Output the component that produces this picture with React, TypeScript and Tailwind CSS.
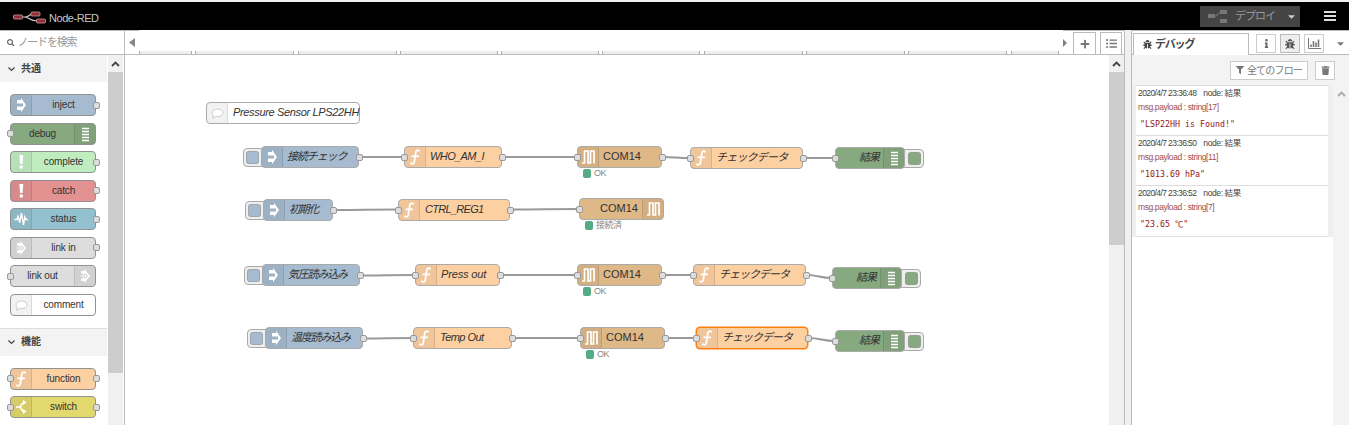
import React from "react";
import { FaSearch, FaBug, FaInfo, FaFilter, FaTrash, FaPlus, FaListUl, FaCaretDown } from "react-icons/fa";

type Kind = "inject" | "debug" | "complete" | "catch" | "status" | "linkin" | "linkout" | "comment" | "function" | "switch" | "serialin" | "serialout";

const COLORS: Record<Kind, string> = {
  inject: "bg-[#a6bbcf]",
  debug: "bg-[#87a980]",
  complete: "bg-[#c0edc0]",
  catch: "bg-[#e49191]",
  status: "bg-[#94c1d0]",
  linkin: "bg-[#dddddd]",
  linkout: "bg-[#dddddd]",
  comment: "bg-white",
  function: "bg-[#fdd0a2]",
  switch: "bg-[#e2d96e]",
  serialin: "bg-[#deb887]",
  serialout: "bg-[#deb887]",
};

function Glyph({ kind }: { kind: Kind }) {
  const common = { width: 20, height: 20, viewBox: "0 0 20 20", fill: "none", stroke: "#fff", className: "shrink-0" };
  switch (kind) {
    case "inject":
      return (
        <svg {...common}>
          <path d="M6 5h4V2.800l5 7.200-5 7.200V15H6v-3.500h6V8.500H6z" fill="#fff" stroke="none" />
        </svg>
      );
    case "debug":
      return (
        <svg {...common}>
          <path d="M7 4.500h7M7 7.500h7M7 10.500h7M7 13.500h7M7 16.500h7" strokeWidth="1.500" />
        </svg>
      );
    case "complete":
    case "catch":
      return (
        <svg {...common}>
          <path d="M8.300 3h4l-.8 9h-2.400zM8.700 13.500h3.200v3H8.700z" fill="#fff" stroke="none" />
        </svg>
      );
    case "status":
      return (
        <svg {...common}>
          <path d="M3.500 10.500H6l1-3 1.700 6L10.500 4l2 12 1.300-8 1 2.500h2" strokeWidth="1.400" />
        </svg>
      );
    case "linkin":
    case "linkout":
      return (
        <svg {...common}>
          <path d="M6 5h3.500V3l5.500 7-5.500 7v-2H6v-2.500h2V7.500H6z" fill="#fff" stroke="none" />
          <path d="M5.500 10h3" strokeWidth="1.200" />
          <circle cx="10.500" cy="10" r="1.700" stroke="#c8c8c8" />
        </svg>
      );
    case "comment":
      return (
        <svg {...common}>
          <path d="M10.500 6c3 0 5.500 1.600 5.500 3.800s-2.500 3.800-5.500 3.800c-.6 0-1.200-.1-1.700-.2L5.500 15.500l.9-2.900c-.9-.7-1.400-1.600-1.400-2.800C5 7.600 7.500 6 10.500 6z" fill="#fff" stroke="#ccc" />
        </svg>
      );
    case "function":
      return (
        <svg {...common}>
          <path d="M14.500 4.500c-.6-2-3.200-2-3.700.7l-1.500 9.600c-.5 2.700-3 2.700-3.700.9M6.500 9.300H14" strokeWidth="1.800" />
        </svg>
      );
    case "switch":
      return (
        <svg {...common}>
          <path d="M5 10h3c3 0 2-4.500 5-4.500M8 10c3 0 2 4.500 5 4.500" strokeWidth="1.700" />
          <path d="M12 3l3.500 2.500L12 8zM12 12l3.500 2.500L12 17z" fill="#fff" stroke="none" />
        </svg>
      );
    default:
      return (
        <svg {...common}>
          <path d="M4 16h2.500V4H10v12h2.500V4H16v12.500" strokeWidth="1.700" />
        </svg>
      );
  }
}

const Port = ({ side }: { side: "left" | "right" }) => (
  <span className={`absolute top-1/2 -mt-[3.5px] h-[7px] w-[7px] rounded-[2px] border border-[#999] bg-[#ddd] ${side === "left" ? "-left-[4.5px]" : "-right-[4.5px]"}`} />
);

function NodeBox({ kind, label, left, right, iconRight, canvas, selected, labelClass = "" }: {
  kind: Kind; label: string; left?: boolean; right?: boolean; iconRight?: boolean; canvas?: boolean; selected?: boolean; labelClass?: string;
}) {
  const align = !canvas ? "justify-center text-[10px] tracking-[-0.150px]" : iconRight ? "justify-end text-[11px]" : "justify-start text-[11px]";
  return (
    <div className={`relative flex h-[22px] w-full items-stretch rounded-[4px] border ${COLORS[kind]} ${selected ? "border-[#ff7f0e] shadow-[0_0_0_0.5px_#ff7f0e]" : canvas ? "border-[#aaa]" : "border-[#929292]"} ${iconRight ? "flex-row-reverse" : ""}`}>
      <span className={`flex w-[21px] shrink-0 items-center justify-center overflow-hidden bg-black/5 ${iconRight ? "rounded-r-[3px] border-l" : "rounded-l-[3px] border-r"} border-black/10`}>
        <Glyph kind={kind} />
      </span>
      <span className={`flex min-w-0 flex-1 items-center whitespace-nowrap leading-none text-[#333] ${align} ${labelClass}`}>{label}</span>
      {left && <Port side="left" />}
      {right && <Port side="right" />}
    </div>
  );
}

type PaletteItem = { kind: Kind; label: string; left?: boolean; right?: boolean; iconRight?: boolean };
const COMMON: PaletteItem[] = [
  { kind: "inject", label: "inject", right: true },
  { kind: "debug", label: "debug", left: true, iconRight: true },
  { kind: "complete", label: "complete", right: true },
  { kind: "catch", label: "catch", right: true },
  { kind: "status", label: "status", right: true },
  { kind: "linkin", label: "link in", right: true },
  { kind: "linkout", label: "link out", left: true, iconRight: true },
  { kind: "comment", label: "comment" },
];
const FUNCTIONS: PaletteItem[] = [
  { kind: "function", label: "function", left: true, right: true },
  { kind: "switch", label: "switch", left: true, right: true },
];

const Chevron = ({ up, className = "" }: { up?: boolean; className?: string }) => (
  <svg width="9" height="6" viewBox="0 0 9 6" fill="none" stroke="currentColor" className={className}>
    <path d={up ? "M1 5l3.500-3.500L8 5" : "M1.500 1.500l3 3 3-3"} strokeWidth={up ? 1.800 : 1.200} />
  </svg>
);

function Category({ title, items, top }: { title: string; items: PaletteItem[]; top?: boolean }) {
  return (
    <section>
      <h2 className={`flex items-center gap-[5px] bg-[#f3f3f3] pl-[7px] text-[10px] font-bold text-[#444] ${top ? "h-[27px]" : "h-[28px] border-t border-[#ddd]"}`}>
        <Chevron />
        <span className="pb-px">{title}</span>
      </h2>
      <div className="flex flex-col gap-[6.500px] pt-[12px] pb-[12px] pl-[10px]">
        {items.map((i) => (
          <div key={i.label} className="w-[86px]"><NodeBox {...i} /></div>
        ))}
      </div>
    </section>
  );
}

function Scrollbar({ thumb }: { thumb: string }) {
  return (
    <div className="flex w-[15px] shrink-0 flex-col bg-[#f0f0f0]">
      <div className="flex h-[17px] items-center justify-center text-[#444]"><Chevron up /></div>
      <div className={`bg-[#cdcdcd] ${thumb}`} />
    </div>
  );
}

const NODES: { x: number; y: number; w: string; kind: Kind; label: string; left?: boolean; right?: boolean; iconRight?: boolean; selected?: boolean; button?: "left" | "right"; status?: string; labelClass?: string }[] = [
  { x: 206, y: 102, w: "w-[154px]", kind: "comment", label: "Pressure Sensor LPS22HH", labelClass: "italic pl-[5px] pb-[2px] tracking-[-0.340px]" },
  { x: 261, y: 146, w: "w-[98px]", kind: "inject", label: "接続チェック", right: true, button: "left", labelClass: "italic pl-[4px] pb-px tracking-[-1.100px]" },
  { x: 404, y: 146, w: "w-[98px]", kind: "function", label: "WHO_AM_I", left: true, right: true, labelClass: "italic pl-[4px] pb-px tracking-[-0.600px]" },
  { x: 577, y: 146, w: "w-[85px]", kind: "serialin", label: "COM14", left: true, right: true, status: "OK", labelClass: "pl-[4px] pb-px" },
  { x: 690, y: 147, w: "w-[113px]", kind: "function", label: "チェックデータ", left: true, right: true, labelClass: "italic pl-[4px] pb-[2px] tracking-[-0.800px]" },
  { x: 835, y: 147, w: "w-[70px]", kind: "debug", label: "結果", left: true, iconRight: true, button: "right", labelClass: "italic pr-[4px] pb-px tracking-[-1px]" },
  { x: 263, y: 199, w: "w-[70px]", kind: "inject", label: "初期化", right: true, button: "left", labelClass: "italic pl-[4px] pb-px tracking-[-1.300px]" },
  { x: 398, y: 199, w: "w-[112px]", kind: "function", label: "CTRL_REG1", left: true, right: true, labelClass: "italic pl-[5px] pb-[2px] tracking-[-0.700px]" },
  { x: 579, y: 198, w: "w-[85px]", kind: "serialout", label: "COM14", left: true, iconRight: true, status: "接続済", labelClass: "pr-[4px] pb-px" },
  { x: 262, y: 264, w: "w-[98px]", kind: "inject", label: "気圧読み込み", right: true, button: "left", labelClass: "italic pl-[4px] pb-[2px] tracking-[-1.200px]" },
  { x: 415, y: 264, w: "w-[85px]", kind: "function", label: "Press out", left: true, right: true, labelClass: "italic pl-[4px] pb-px tracking-[-0.150px]" },
  { x: 577, y: 264, w: "w-[85px]", kind: "serialin", label: "COM14", left: true, right: true, status: "OK", labelClass: "pl-[4px] pb-px" },
  { x: 693, y: 264, w: "w-[113px]", kind: "function", label: "チェックデータ", left: true, right: true, labelClass: "italic pl-[4px] pb-[2px] tracking-[-1px]" },
  { x: 832, y: 267, w: "w-[70px]", kind: "debug", label: "結果", left: true, iconRight: true, button: "right", labelClass: "italic pr-[4px] pb-[2px] tracking-[-1px]" },
  { x: 265, y: 327, w: "w-[98px]", kind: "inject", label: "温度読み込み", right: true, button: "left", labelClass: "italic pl-[4px] pb-[2px] tracking-[-1.200px]" },
  { x: 413, y: 327, w: "w-[99px]", kind: "function", label: "Temp Out", left: true, right: true, labelClass: "italic pl-[5px] pb-px tracking-[-0.550px]" },
  { x: 580, y: 327, w: "w-[85px]", kind: "serialin", label: "COM14", left: true, right: true, status: "OK", labelClass: "pl-[4px] pb-px" },
  { x: 696, y: 327, w: "w-[112px]", kind: "function", label: "チェックデータ", left: true, right: true, selected: true, labelClass: "italic pl-[4px] pb-[2px] tracking-[-1px]" },
  { x: 835, y: 330, w: "w-[70px]", kind: "debug", label: "結果", left: true, iconRight: true, button: "right", labelClass: "italic pr-[4px] pb-[2px] tracking-[-1px]" },
];

const WIRES = [
  [359, 157, 404, 157], [502, 157, 577, 157], [662, 157, 690, 158], [803, 158, 835, 158],
  [333, 210, 398, 209.5], [510, 209.5, 579, 209],
  [360, 275.5, 415, 275], [500, 275, 577, 275], [662, 275, 693, 275], [806, 275, 832, 278],
  [363, 338.5, 413, 338], [512, 338, 580, 338], [665, 338, 696, 338], [808, 338, 835, 341],
];

const ORIGIN_X = 125;
const ORIGIN_Y = 55;

function Canvas() {
  return (
    <div className="relative min-w-0 flex-1 overflow-hidden bg-white">
      <svg className="absolute inset-0" width="983" height="370" viewBox="125 55 983 370" fill="none">
        {WIRES.map(([a, b, c, d], i) => {
          const m = (c - a) * 0.5;
          return <path key={i} d={`M${a} ${b}C${a + m} ${b} ${c - m} ${d} ${c} ${d}`} stroke="#999" strokeWidth="2" />;
        })}
      </svg>
      {NODES.map(({ x, y, w, button, status, ...n }, i) => (
        <div key={i} className={`absolute ${w}`} style={{ left: x - ORIGIN_X, top: y - ORIGIN_Y }}>
          {button && (
            <span className={`absolute top-[2px] flex h-[19px] w-[23px] items-center rounded-[4px] border border-[#aaa] bg-[#eee] px-[2px] ${button === "left" ? "-left-[18px] justify-start" : "-right-[19px] justify-end"}`}>
              <span className={`h-[13px] w-[13px] rounded-[3px] border border-[#999]/60 ${COLORS[n.kind]}`} />
            </span>
          )}
          <NodeBox {...n} canvas />
          {status && (
            <span className="absolute top-[22px] left-[6px] flex h-[10px] items-center gap-[3px] text-[9px] leading-none whitespace-nowrap text-[#888]">
              <span className="h-[9px] w-[8px] rounded-[2px] bg-[#5a8]" />
              <span className="tracking-[-0.500px]">{status}</span>
            </span>
          )}
        </div>
      ))}
    </div>
  );
}

const TAB_WIDTHS = ["w-[53px]", "w-[99px]", "w-[99px]", "w-[98px]", "w-[98px]", "w-[98px]", "w-[99px]", "w-[99px]", "w-[99px]"];

function Workspace() {
  return (
    <main className="flex w-[1000px] shrink-0 flex-col border-r border-[#bbb]">
      <div className="flex h-[25px] items-stretch border-b border-[#bbb]">
        <div className="flex w-[14px] items-center border-t border-[#bbb] pl-[4px]">
          <svg width="6" height="9" viewBox="0 0 6 9"><path d="M6 0v9L0 4.500z" fill="#888" /></svg>
        </div>
        <div className="flex flex-1 items-end gap-[3.300px] overflow-hidden">
          {TAB_WIDTHS.map((w, i) => <span key={i} className={`h-[3px] shrink-0 border-x border-[#aaa] bg-[#eee] ${w}`} />)}
          <span className="h-[3px] w-[48px] shrink-0 border-x border-[#aaa] bg-[#eee]" />
        </div>
        <div className="flex w-[61px] items-end border-t border-[#bbb]">
          <svg className="mb-[7px]" width="4" height="8" viewBox="0 0 4 8"><path d="M0 0v8l4-4z" fill="#788288" /></svg>
          <span className="ml-[6px] flex h-[22px] w-[23px] items-center justify-center border border-b-0 border-[#bbb] text-[10px] text-[#777]"><FaPlus /></span>
          <span className="ml-[4px] flex h-[22px] w-[22px] items-center justify-center border border-b-0 border-[#bbb] text-[11px] text-[#777]"><FaListUl /></span>
        </div>
      </div>
      <div className="flex min-h-0 flex-1">
        <Canvas />
        <Scrollbar thumb="h-[173px]" />
      </div>
    </main>
  );
}

const MESSAGES = [
  { time: "2020/4/7 23:36:48", len: 17, value: '"LSP22HH is Found!"' },
  { time: "2020/4/7 23:36:50", len: 11, value: '"1013.69 hPa"' },
  { time: "2020/4/7 23:36:52", len: 7, value: '"23.65 ℃"' },
];

function Sidebar() {
  return (
    <aside className="flex w-[218px] shrink-0 flex-col border-l border-[#bbb] bg-[#f3f3f3]">
      <div className="flex h-[25px] shrink-0 items-end border-t border-b border-[#bbb] bg-white pl-px">
        <div className="-mb-px flex h-[22px] w-[116px] items-center gap-[3px] border border-b-0 border-[#bbb] bg-white pb-px pl-[9px] text-[11px] font-bold text-[#444]">
          <FaBug className="text-[9px]" />
          <span className="tracking-[-1.200px]">デバッグ</span>
        </div>
        <span className="mb-[1px] ml-[7px] flex h-[19px] w-[20px] items-center justify-center border border-[#ccc] text-[9px] text-[#666]"><FaInfo /></span>
        <span className="mb-[1px] ml-[4px] flex h-[19px] w-[20px] items-center justify-center border border-[#bbb] bg-[#eee] text-[10px] text-[#555]"><FaBug /></span>
        <span className="mb-[1px] ml-[4px] flex h-[19px] w-[20px] items-center justify-center border border-[#ccc] text-[#777]">
          <svg width="13" height="11" viewBox="0 0 13 11" fill="none" stroke="currentColor"><path d="M.5 0v10.500H13" /><path d="M3 9V6.500M5.500 9V3M8 9V4.500M10.500 9V1.500" strokeWidth="1.600" /></svg>
        </span>
        <FaCaretDown className="mb-[5px] ml-[11px] text-[11px] text-[#777]" />
      </div>
      <div className="flex h-[30px] shrink-0 items-center gap-[7px] pl-[98px] text-[#777]">
        <span className="flex h-[19px] w-[78px] items-center justify-center gap-[3px] border border-[#ccc] bg-white text-[10px]">
          <FaFilter className="text-[8px]" /><span className="tracking-[-0.800px] whitespace-nowrap">全てのフロー</span>
        </span>
        <span className="flex h-[19px] w-[20px] items-center justify-center border border-[#ccc] bg-white text-[9px]"><FaTrash /></span>
      </div>
      <div className="flex min-h-0 flex-1">
        <div className="flex w-[201px] flex-col bg-white">
          <div className="border-r-[5px] border-l-[4px] border-[#eee]">
            {MESSAGES.map((m, i) => (
              <article key={m.len} className={`flex flex-col border-b border-[#ddd] pl-[2px] whitespace-nowrap ${i === 0 ? "h-[51px] border-t" : i === 1 ? "h-[50px]" : "h-[51px]"}`}>
                <div className="flex h-[15px] items-center gap-[7px] text-[8.500px] tracking-[-0.600px] text-[#444]">
                  <span>{m.time}</span><span className="tracking-[-0.400px]">node: 結果</span>
                </div>
                <div className="flex h-[13px] items-center text-[8.500px] tracking-[-0.400px] text-[#a05050]">msg.payload : string[{m.len}]</div>
                <div className="flex h-[21px] items-center pl-[2px] font-['DejaVu_Sans_Mono','Noto_Sans_CJK_JP',monospace] text-[8.300px] text-[#981515]">{m.value}</div>
              </article>
            ))}
          </div>
        </div>
        <div className="flex flex-1 justify-center bg-[#f3f3f3] pt-[6px] text-[#aaa]"><Chevron up /></div>
      </div>
    </aside>
  );
}

export default function App() {
  return (
    <div className="flex h-[425px] w-[1349px] flex-col overflow-hidden bg-white font-['Liberation_Sans','Noto_Sans_CJK_JP',sans-serif]">
      <header className="flex h-[30px] shrink-0 items-center border-t-2 border-[#eef0f2] bg-black">
        <svg className="mt-[3px] ml-[13px]" width="34" height="14" viewBox="0 0 34 14" fill="none">
          <path d="M9 6h3c5 0 4-3.500 9-3.500M11 6c6 0 5 4 13 4" stroke="#ccc" strokeWidth="1.200" />
          <g fill="#8f2f35" stroke="#c99" strokeWidth=".8">
            <rect x=".5" y="4" width="9" height="4" rx="1" />
            <rect x="18" y="1" width="9" height="4" rx="1" />
            <rect x="23.500" y="8" width="9" height="4" rx="1" />
          </g>
        </svg>
        <span className="ml-[2px] pt-[4px] text-[11px] tracking-[-0.450px] text-[#c7c7c7]">Node-RED</span>
        <div className="ml-auto flex h-[21px] w-[100px] items-center bg-[#444] text-[#999]">
          <svg className="ml-[8px]" width="20" height="14" viewBox="0 0 20 14" fill="#777">
            <rect y="5" width="7" height="4" /><rect x="12" y="1" width="7" height="4" /><rect x="12" y="10" width="7" height="4" />
            <path d="M6 7.500c4 0 3-4 7-4" stroke="#777" fill="none" strokeWidth="1.200" />
          </svg>
          <span className="ml-[7px] text-[11px] tracking-[-1px]">デプロイ</span>
          <FaCaretDown className="mr-[3px] ml-auto text-[11px] text-[#ccc]" />
        </div>
        <div className="mr-[13px] ml-[24px] flex w-[12px] flex-col gap-[2px]">
          <span className="h-[2px] bg-[#ddd]" /><span className="h-[2px] bg-[#ddd]" /><span className="h-[2px] bg-[#ddd]" />
        </div>
      </header>
      <div className="flex min-h-0 flex-1">
        <nav className="flex w-[125px] shrink-0 flex-col border-r border-[#bbb]">
          <div className="flex h-[25px] shrink-0 items-center gap-[3px] border-t border-b border-[#bbb] pl-[7px] text-[#999]">
            <FaSearch className="text-[7.500px] text-[#666]" />
            <span className="text-[11px] tracking-[-1.200px]">ノードを検索</span>
          </div>
          <div className="flex min-h-0 flex-1">
            <div className="mr-px w-[107px] overflow-hidden">
              <Category title="共通" items={COMMON} top />
              <Category title="機能" items={FUNCTIONS} />
            </div>
            <Scrollbar thumb="h-[301px]" />
          </div>
        </nav>
        <Workspace />
        <div className="w-[6px] shrink-0 bg-[#f0f0f0]" />
        <Sidebar />
      </div>
    </div>
  );
}
